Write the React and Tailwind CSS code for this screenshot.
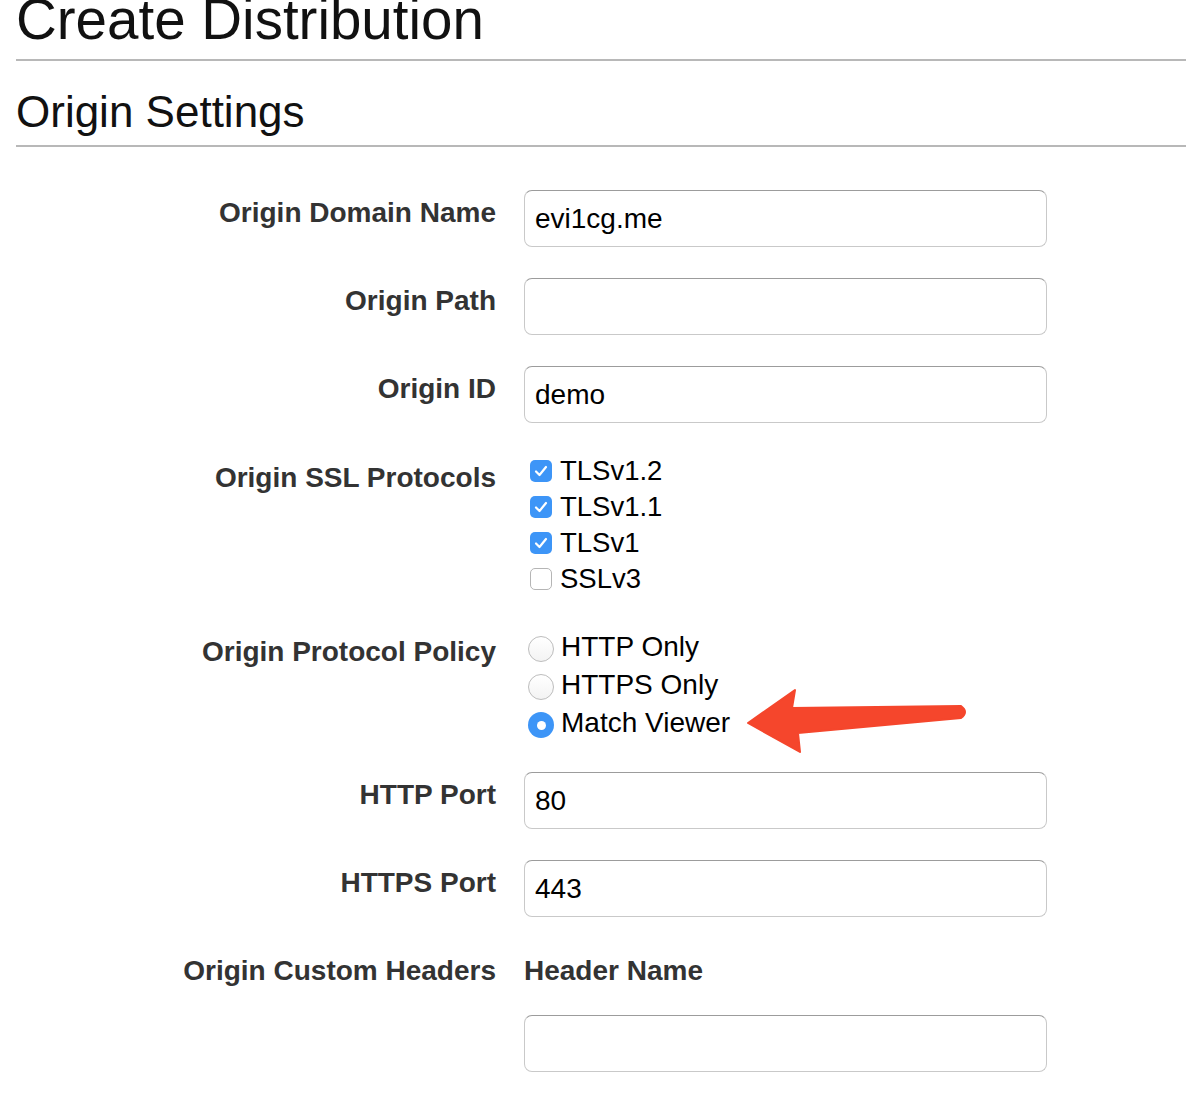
import React from "react";

function Label({ children, pt = "pt-[3px]" }) {
  return (
    <div
      className={`w-[480px] shrink-0 text-right text-[28px] leading-[40px] font-bold text-[#333] ${pt}`}
    >
      {children}
    </div>
  );
}

function TextInput({ value = "" }) {
  return (
    <input
      type="text"
      defaultValue={value}
      className="block w-[523px] h-[57px] rounded-[8px] border border-[#c9c9c9] border-t-[#9c9c9c] bg-white px-[10px] text-[28px] text-black outline-none font-['Liberation_Sans',Arial,sans-serif]"
    />
  );
}

function Check({ checked, label }) {
  return (
    <div className="flex items-center h-[36px]">
      {checked ? (
        <span className="ml-[6px] flex h-[22px] w-[22px] items-center justify-center rounded-[5px] bg-[#3d95f7]">
          <svg width="14" height="12" viewBox="0 0 14 12">
            <path
              d="M2 6.5 L5.5 10 L12 2"
              fill="none"
              stroke="white"
              strokeWidth="2.2"
              strokeLinecap="round"
              strokeLinejoin="round"
            />
          </svg>
        </span>
      ) : (
        <span className="ml-[6px] block h-[22px] w-[22px] rounded-[5px] border border-[#b5b5b5] bg-white" />
      )}
      <span className="ml-[8px] text-[27.5px] leading-[36px] text-black">{label}</span>
    </div>
  );
}

function Radio({ checked, label }) {
  return (
    <div className="flex items-start h-[38px]">
      {checked ? (
        <span className="ml-[4px] mt-[8px] flex h-[26px] w-[26px] items-center justify-center rounded-full bg-[#3d95f7]">
          <span className="block h-[9px] w-[9px] rounded-full bg-white" />
        </span>
      ) : (
        <span className="ml-[4px] mt-[8px] block h-[26px] w-[26px] rounded-full border border-[#bdbdbd] bg-gradient-to-b from-white to-[#f3f3f3]" />
      )}
      <span className="ml-[7px] text-[28px] leading-[38px] text-black">{label}</span>
    </div>
  );
}

export default function App() {
  return (
    <div className="relative min-h-screen overflow-hidden bg-white pl-4 font-['Liberation_Sans',Arial,sans-serif]">
      <h1 className="-mt-[8px] text-[56.5px] leading-[56px] font-normal text-[#111]">
        Create Distribution
      </h1>
      <div className="mt-[11px] h-[2px] bg-[#b8b8b8]" />
      <h2 className="mt-[28px] text-[44px] leading-[45px] font-normal text-[#111]">
        Origin Settings
      </h2>
      <div className="mt-[11px] h-[2px] bg-[#b8b8b8]" />

      <div className="flex flex-col">
        <div className="mt-[43px] flex gap-[28px]">
          <Label>Origin Domain Name</Label>
          <TextInput value="evi1cg.me" />
        </div>
        <div className="mt-[31px] flex gap-[28px]">
          <Label>Origin Path</Label>
          <TextInput value="" />
        </div>
        <div className="mt-[31px] flex gap-[28px]">
          <Label>Origin ID</Label>
          <TextInput value="demo" />
        </div>
        <div className="mt-[30px] flex gap-[28px]">
          <Label pt="pt-[5px]">Origin SSL Protocols</Label>
          <div className="flex flex-col">
            <Check checked label="TLSv1.2" />
            <Check checked label="TLSv1.1" />
            <Check checked label="TLSv1" />
            <Check checked={false} label="SSLv3" />
          </div>
        </div>
        <div className="mt-[31px] flex gap-[28px]">
          <Label pt="pt-[4px]">Origin Protocol Policy</Label>
          <div className="flex flex-col">
            <Radio checked={false} label="HTTP Only" />
            <Radio checked={false} label="HTTPS Only" />
            <Radio checked label="Match Viewer" />
          </div>
        </div>
        <div className="mt-[30px] flex gap-[28px]">
          <Label>HTTP Port</Label>
          <TextInput value="80" />
        </div>
        <div className="mt-[31px] flex gap-[28px]">
          <Label>HTTPS Port</Label>
          <TextInput value="443" />
        </div>
        <div className="mt-[31px] flex gap-[28px]">
          <Label>Origin Custom Headers</Label>
          <div className="flex flex-col">
            <div className="pt-[3px] text-[28px] leading-[40px] font-bold text-[#333]">
              Header Name
            </div>
            <div className="mt-[24px]">
              <TextInput value="" />
            </div>
          </div>
        </div>
        <div className="h-[50px]" />
      </div>

      <svg
        className="pointer-events-none absolute left-[740px] top-[680px]"
        width="240"
        height="80"
        viewBox="0 0 240 80"
      >
        <path
          d="M8 43 L55 10 L52 28 L221 26 Q229 32 221 38 L58 53 L60 72 Z"
          fill="#f5462c"
          stroke="#f5462c"
          strokeWidth="2"
          strokeLinejoin="round"
        />
      </svg>
    </div>
  );
}
